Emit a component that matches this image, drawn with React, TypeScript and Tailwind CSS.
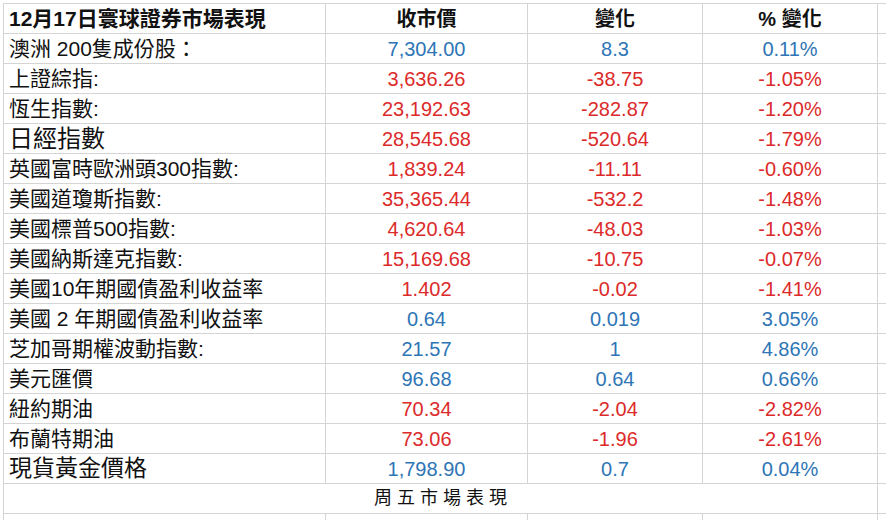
const rows: { name: string; price: string; change: string; pct: string; up: boolean; size?: string }[] = [
  { name: "澳洲 200隻成份股：", price: "7,304.00", change: "8.3", pct: "0.11%", up: true },
  { name: "上證綜指:", price: "3,636.26", change: "-38.75", pct: "-1.05%", up: false },
  { name: "恆生指數:", price: "23,192.63", change: "-282.87", pct: "-1.20%", up: false },
  { name: "日經指數", price: "28,545.68", change: "-520.64", pct: "-1.79%", up: false, size: "text-[24px]" },
  { name: "英國富時歐洲頭300指數:", price: "1,839.24", change: "-11.11", pct: "-0.60%", up: false },
  { name: "美國道瓊斯指數:", price: "35,365.44", change: "-532.2", pct: "-1.48%", up: false },
  { name: "美國標普500指數:", price: "4,620.64", change: "-48.03", pct: "-1.03%", up: false },
  { name: "美國納斯達克指數:", price: "15,169.68", change: "-10.75", pct: "-0.07%", up: false },
  { name: "美國10年期國債盈利收益率", price: "1.402", change: "-0.02", pct: "-1.41%", up: false },
  { name: "美國 2 年期國債盈利收益率", price: "0.64", change: "0.019", pct: "3.05%", up: true },
  { name: "芝加哥期權波動指數:", price: "21.57", change: "1", pct: "4.86%", up: true },
  { name: "美元匯價", price: "96.68", change: "0.64", pct: "0.66%", up: true },
  { name: "紐約期油", price: "70.34", change: "-2.04", pct: "-2.82%", up: false },
  { name: "布蘭特期油", price: "73.06", change: "-1.96", pct: "-2.61%", up: false },
  { name: "現貨黃金價格", price: "1,798.90", change: "0.7", pct: "0.04%", up: true, size: "text-[23px]" },
];

const cell = "h-[30px] flex items-center border-r border-b border-[#d4d4d4] shrink-0";

const App = () => {
  return (
    <div className="w-[886px] h-[520px] overflow-hidden bg-white pt-[3px] pl-[3px] font-['Liberation_Sans','Noto_Sans_CJK_TC',sans-serif] text-[20px] text-[#111]">
      <div className="border-t border-l border-[#d4d4d4] w-[1000px]">
        <div className="flex font-bold">
          <div className={`${cell} w-[322px] pl-[5px] text-[21px]`}>12月17日寰球證券市場表現</div>
          <div className={`${cell} w-[202px] justify-center`}>收市價</div>
          <div className={`${cell} w-[175px] justify-center`}>變化</div>
          <div className={`${cell} w-[175px] justify-center`}>% 變化</div>
          <div className={`${cell} w-[120px]`} />
        </div>

        {rows.map((r) => {
          const color = r.up ? "text-[#2e75b6]" : "text-[#dc2a2a]";
          return (
            <div key={r.name} className="flex">
              <div className={`${cell} w-[322px] pl-[5px] whitespace-nowrap overflow-hidden ${r.size ?? "text-[21px]"}`}>
                {r.name}
              </div>
              <div className={`${cell} w-[202px] justify-center ${color}`}>{r.price}</div>
              <div className={`${cell} w-[175px] justify-center ${color}`}>{r.change}</div>
              <div className={`${cell} w-[175px] justify-center ${color}`}>{r.pct}</div>
              <div className={`${cell} w-[120px]`} />
            </div>
          );
        })}

        <div className="flex">
          <div className={`${cell} w-[874px] justify-center text-[18px] tracking-[5px] pl-[5px]`}>周五市場表現</div>
          <div className={`${cell} w-[120px]`} />
        </div>
        <div className="flex">
          <div className={`${cell} w-[322px]`} />
          <div className={`${cell} w-[202px]`} />
          <div className={`${cell} w-[175px]`} />
          <div className={`${cell} w-[175px]`} />
          <div className={`${cell} w-[120px]`} />
        </div>
      </div>
    </div>
  );
};

export default App;
